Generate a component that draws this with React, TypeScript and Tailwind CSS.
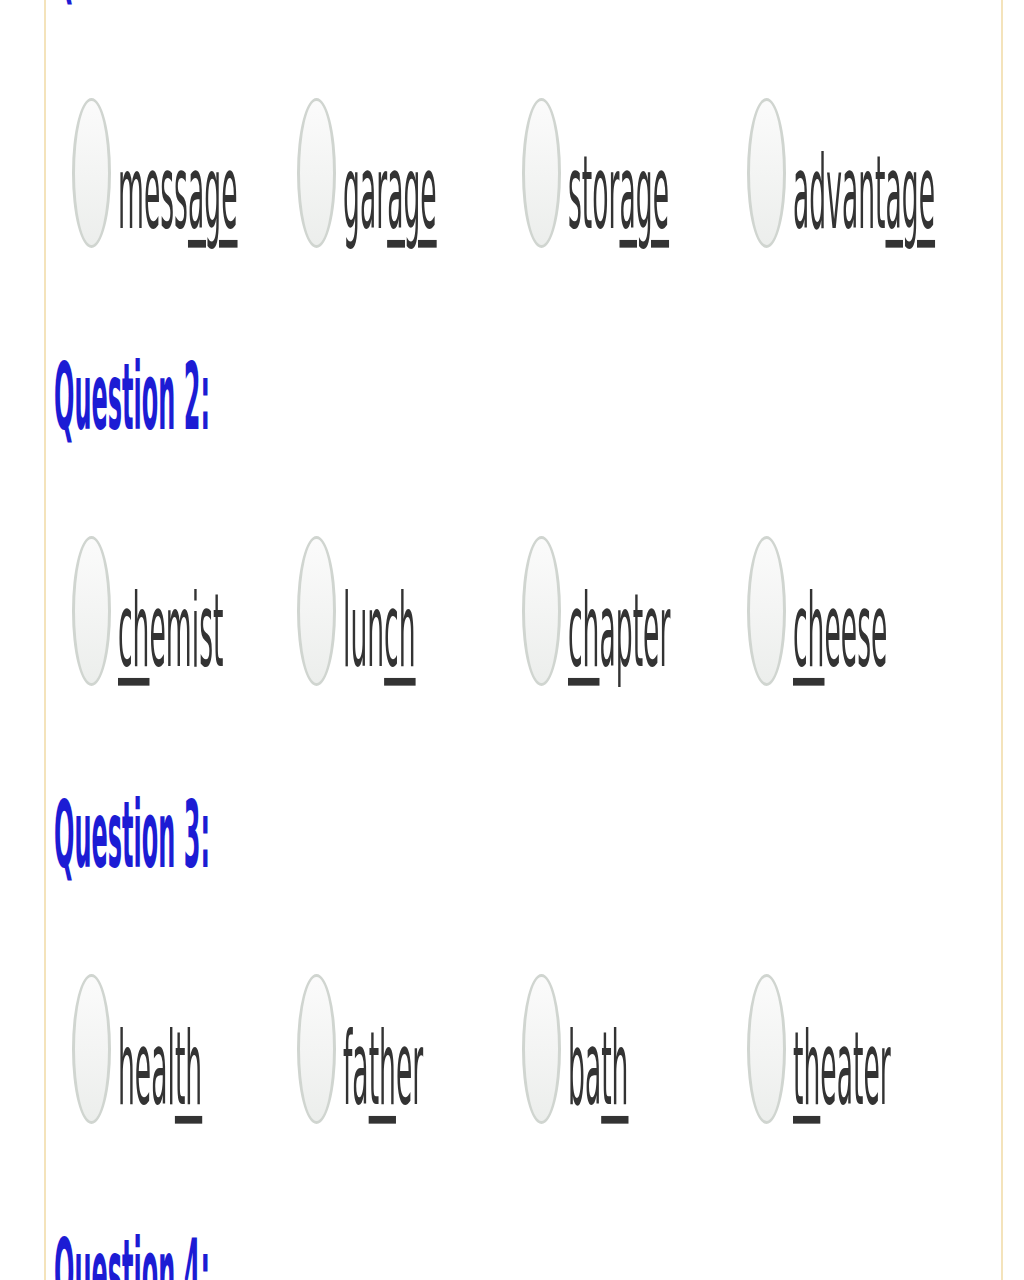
type Option = { before: string; mark: string; after: string };

interface Question {
  n: number;
  options: Option[];
}

const opt = (before: string, mark: string, after: string): Option => ({ before, mark, after });

const questions: Question[] = [
  {
    n: 1,
    options: [opt('mess', 'age', ''), opt('gar', 'age', ''), opt('stor', 'age', ''), opt('advant', 'age', '')],
  },
  {
    n: 2,
    options: [opt('', 'ch', 'emist'), opt('lun', 'ch', ''), opt('', 'ch', 'apter'), opt('', 'ch', 'eese')],
  },
  {
    n: 3,
    options: [opt('heal', 'th', ''), opt('fa', 'th', 'er'), opt('ba', 'th', ''), opt('', 'th', 'eater')],
  },
  { n: 4, options: [] },
];

const Radio = () => (
  <div className="w-[39px] h-[150px] shrink-0 rounded-[50%] border-[3px] border-[#d0d5d0] bg-linear-to-b from-[#fbfbfb] to-[#eceeec]" />
);

const OptionItem = ({ option }: { option: Option }) => (
  <label className="flex items-start">
    <Radio />
    <div className="ml-[7px] mt-[38px] h-[117px]">
      <span className="inline-block origin-top scale-y-[3.85] text-[26.6px] leading-[30px] text-[#333333] whitespace-nowrap">
        {option.before}
        <span className="underline decoration-[1.8px] underline-offset-[2.5px]">{option.mark}</span>
        {option.after}
      </span>
    </div>
  </label>
);

const QuestionBlock = ({ question }: { question: Question }) => (
  <div className="flex flex-col h-[438px]">
    <div className="h-[109px]">
      <span className="inline-block origin-top scale-y-[3.85] translate-y-[1px] text-[24px] leading-[28px] font-bold text-[#1c1cd4] whitespace-nowrap">
        Question {question.n}:
      </span>
    </div>
    {question.options.length > 0 && (
      <div className="mt-[84px] ml-[18px] h-[155px] grid grid-cols-[repeat(4,225px)]">
        {question.options.map((o, i) => (
          <OptionItem key={i} option={o} />
        ))}
      </div>
    )}
  </div>
);

export default function App() {
  return (
    <div className="h-[1280px] overflow-hidden bg-white font-['DejaVu_Sans',Verdana,sans-serif]">
      <div className="ml-[44px] w-[959px] border-x-2 border-[#f4e3bb] pl-[8px] flow-root">
        <div className="-mt-[95px]">
          {questions.map((q) => (
            <QuestionBlock key={q.n} question={q} />
          ))}
        </div>
      </div>
    </div>
  );
}
